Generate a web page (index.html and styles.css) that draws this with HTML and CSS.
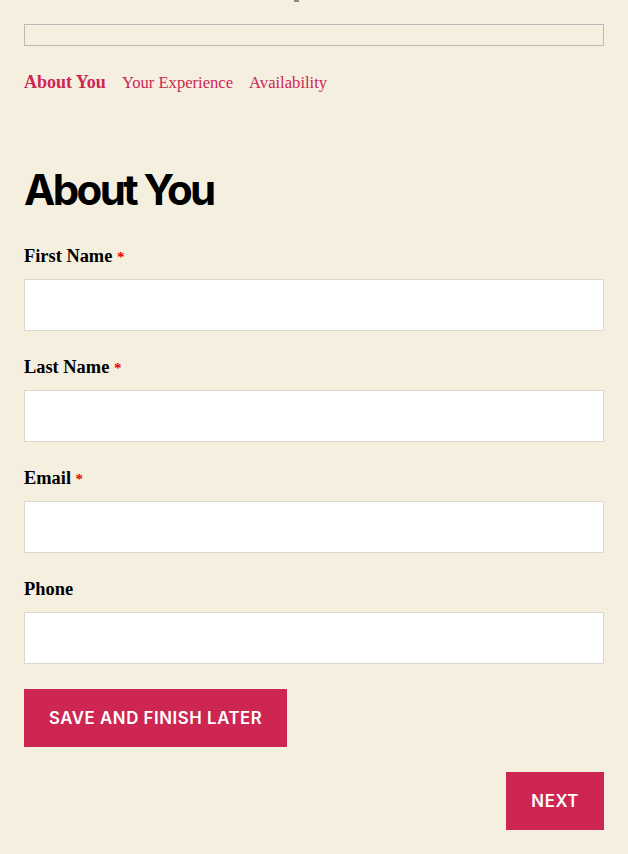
FILE: index.html
```html
<!DOCTYPE html>
<html lang="en">
<head>
<meta charset="utf-8">
<title>About You</title>
<link rel="stylesheet" href="styles.css">
</head>
<body>
<div class="page">
  <div class="cut-mark"></div>
  <div class="progress"></div>
  <nav class="steps">
    <span class="step active">About You</span>
    <span class="step">Your Experience</span>
    <span class="step">Availability</span>
  </nav>
  <h2 class="title">About You</h2>
  <form class="form">
    <div class="field">
      <label class="label">First Name <span class="req">*</span></label>
      <input class="input" type="text">
    </div>
    <div class="field">
      <label class="label">Last Name <span class="req">*</span></label>
      <input class="input" type="text">
    </div>
    <div class="field">
      <label class="label">Email <span class="req">*</span></label>
      <input class="input" type="email">
    </div>
    <div class="field">
      <label class="label">Phone</label>
      <input class="input" type="tel">
    </div>
    <div class="actions">
      <button type="button" class="btn">Save and Finish Later</button>
      <div class="next-row">
        <button type="button" class="btn">Next</button>
      </div>
    </div>
  </form>
</div>
</body>
</html>
```
FILE: styles.css
```css
* { box-sizing: border-box; }
html, body { margin: 0; padding: 0; }
body {
  background: #f5efe0;
  color: #000;
  font-family: "Liberation Serif", "Times New Roman", serif;
}
.page {
  padding: 0 24px;
}
.cut-mark {
  width: 5px;
  height: 2px;
  background: #8a8a8a;
  margin-left: 270px;
}
.progress {
  margin-top: 22px;
  height: 22px;
  border: 1px solid #b9b9b9;
}
.steps {
  display: flex;
  align-items: baseline;
  gap: 16px;
  margin-top: 26px;
  height: 20px;
  line-height: 20px;
}
.step {
  color: #cd2653;
  font-size: 16.6px;
}
.step.active {
  font-weight: 700;
  font-size: 18px;
}
.title {
  margin: 76px 0 0;
  font-family: Inter, "Liberation Sans", sans-serif;
  font-weight: 700;
  font-size: 42px;
  line-height: 44px;
  letter-spacing: -0.062em;
}
.form {
  margin-top: 32px;
}
.field {
  margin-bottom: 24px;
}
.label {
  display: block;
  height: 24px;
  font-weight: 700;
  font-size: 18.4px;
  line-height: 24px;
  margin-bottom: 11px;
}
.req {
  color: #e00;
  font-size: 15px;
  line-height: 0;
}
.input {
  display: block;
  width: 100%;
  height: 52px;
  margin: 0;
  border: 1px solid #dcd7ca;
  background: #fff;
  border-radius: 0;
}
.actions {
  margin-top: 25px;
}
.btn {
  display: inline-block;
  height: 58px;
  padding: 0 25px;
  border: 0;
  border-radius: 0;
  background: #cd2653;
  color: #fff;
  font-family: Inter, "Liberation Sans", sans-serif;
  font-weight: 600;
  font-size: 16.8px;
  letter-spacing: 0.0333em;
  text-transform: uppercase;
  cursor: pointer;
}
.next-row {
  display: flex;
  justify-content: flex-end;
  margin-top: 25px;
}
```
